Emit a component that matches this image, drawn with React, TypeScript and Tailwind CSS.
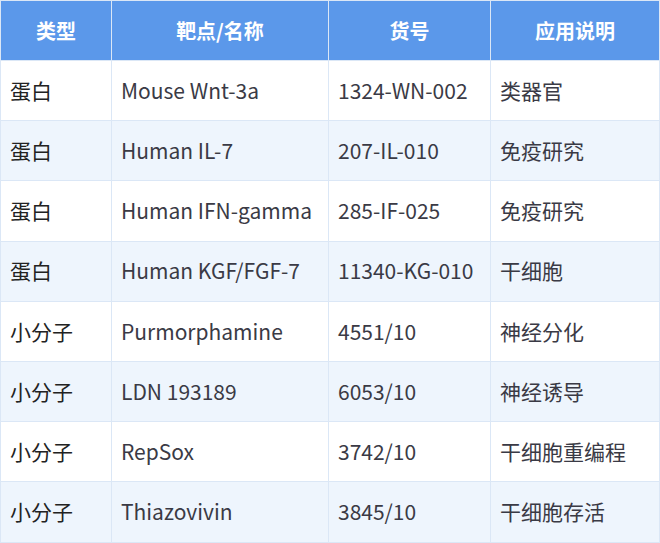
const rows = [
  ["蛋白", "Mouse Wnt-3a", "1324-WN-002", "类器官"],
  ["蛋白", "Human IL-7", "207-IL-010", "免疫研究"],
  ["蛋白", "Human IFN-gamma", "285-IF-025", "免疫研究"],
  ["蛋白", "Human KGF/FGF-7", "11340-KG-010", "干细胞"],
  ["小分子", "Purmorphamine", "4551/10", "神经分化"],
  ["小分子", "LDN 193189", "6053/10", "神经诱导"],
  ["小分子", "RepSox", "3742/10", "干细胞重编程"],
  ["小分子", "Thiazovivin", "3845/10", "干细胞存活"],
];

const headers = ["类型", "靶点/名称", "货号", "应用说明"];

export default function App() {
  return (
    <div className="w-[660px] h-[543px] overflow-hidden bg-white" style={{ fontFamily: '"Noto Sans CJK SC", "Noto Sans", sans-serif' }}>
      <table className="w-[659px] border-collapse table-fixed">
        <colgroup>
          <col className="w-[111px]" />
          <col className="w-[217px]" />
          <col className="w-[162px]" />
          <col className="w-[169px]" />
        </colgroup>
        <thead>
          <tr className="h-[60px] bg-[#5b98ea]">
            {headers.map((h) => (
              <th key={h} className="border border-[#dbe7f6] text-center text-[20px] font-bold text-white">{h}</th>
            ))}
          </tr>
        </thead>
        <tbody>
          {rows.map((r, i) => (
            <tr key={i} className={`h-[60.2px] ${i % 2 ? "bg-[#eef5fd]" : "bg-white"}`}>
              {r.map((c, j) => (
                <td key={j} className={`border border-[#dbe7f6] px-[9px] text-[21px] ${j === 0 ? "text-[#222]" : "text-[#3a3a45]"}`}>{c}</td>
              ))}
            </tr>
          ))}
        </tbody>
      </table>
    </div>
  );
}
